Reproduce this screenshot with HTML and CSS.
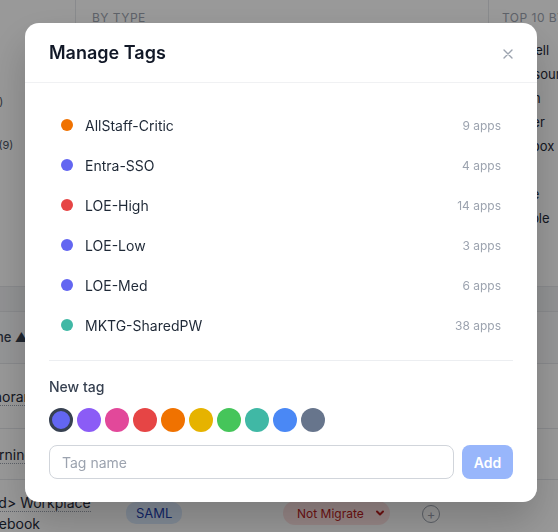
FILE: index.html
```html
<!DOCTYPE html>
<html lang="en">
<head>
  <meta charset="UTF-8" />
  <meta name="viewport" content="width=device-width, initial-scale=1.0"/>
  <title>Manage Tags</title>
  <link rel="stylesheet" href="styles.css">
</head>
<body>
  <div class="page">
    <section class="stats">
      <div class="stat-col">
        <ul class="legend">
          <li>Other (21)</li>
          <li class="shifted">Service (9)</li>
        </ul>
      </div>
      <div class="stat-col">
        <div class="stat-label">By Type</div>
      </div>
      <div class="stat-col">
        <div class="stat-label">Top 10 by apps</div>
        <ul class="top-list">
          <li>Gabriell</li>
          <li>IT Resource</li>
          <li>Bloom</li>
          <li>Leader</li>
          <li>Dropbox</li>
          <li>Shop</li>
          <li>Office</li>
          <li>Airtable</li>
          <li class="more">·</li>
        </ul>
      </div>
    </section>

    <section class="table-card">
      <div class="row head">
        <div class="cell">Name ▲</div>
        <div class="cell">Type</div>
        <div class="cell">Status</div>
        <div class="cell"></div>
      </div>
      <div class="row tall">
        <div class="cell"><span class="app-name">Honorarium</span></div>
        <div class="cell"></div>
        <div class="cell"></div>
        <div class="cell"></div>
      </div>
      <div class="row">
        <div class="cell"><span class="app-name">Learning</span></div>
        <div class="cell"></div>
        <div class="cell"></div>
        <div class="cell"></div>
      </div>
      <div class="row">
        <div class="cell"><span class="app-name">&lt;Old&gt; Workplace Facebook</span></div>
        <div class="cell"><span class="badge">SAML</span></div>
        <div class="cell">
          <span class="status">Not Migrate
            <svg width="10" height="10" viewBox="0 0 10 10"><path d="M2 3.5 L5 6.5 L8 3.5" fill="none" stroke="#b91c1c" stroke-width="2" stroke-linecap="round" stroke-linejoin="round"/></svg>
          </span>
        </div>
        <div class="cell"><span class="add-tag">+</span></div>
      </div>
    </section>
  </div>

  <div class="overlay">
    <div class="modal">
      <div class="modal-header">
        <h2>Manage Tags</h2>
        <button class="close-btn" aria-label="Close">
          <svg width="10" height="10" viewBox="0 0 10 10"><path d="M1 1 L9 9 M9 1 L1 9" stroke="#9ca3af" stroke-width="1.4" stroke-linecap="round"/></svg>
        </button>
      </div>

      <div class="modal-body">
        <ul class="tag-list">
          <li class="tag-row"><span class="dot orange"></span><span class="tag-name">AllStaff-Critic</span><span class="tag-count">9 apps</span></li>
          <li class="tag-row"><span class="dot indigo"></span><span class="tag-name">Entra-SSO</span><span class="tag-count">4 apps</span></li>
          <li class="tag-row"><span class="dot red"></span><span class="tag-name">LOE-High</span><span class="tag-count">14 apps</span></li>
          <li class="tag-row"><span class="dot indigo"></span><span class="tag-name">LOE-Low</span><span class="tag-count">3 apps</span></li>
          <li class="tag-row"><span class="dot indigo"></span><span class="tag-name">LOE-Med</span><span class="tag-count">6 apps</span></li>
          <li class="tag-row"><span class="dot teal"></span><span class="tag-name">MKTG-SharedPW</span><span class="tag-count">38 apps</span></li>
        </ul>

        <div class="new-tag">
          <div class="new-tag-label">New tag</div>
          <div class="swatches">
            <span class="swatch indigo selected"></span>
            <span class="swatch violet"></span>
            <span class="swatch pink"></span>
            <span class="swatch red"></span>
            <span class="swatch orange"></span>
            <span class="swatch yellow"></span>
            <span class="swatch green"></span>
            <span class="swatch teal"></span>
            <span class="swatch blue"></span>
            <span class="swatch slate"></span>
          </div>
          <div class="new-tag-row">
            <input type="text" placeholder="Tag name" />
            <button class="add-btn" disabled>Add</button>
          </div>
        </div>
      </div>
    </div>
  </div>
</body>
</html>
```

FILE: styles.css
```css
* {
  box-sizing: border-box;
}

body {
  margin: 0;
  background: #f3f4f6;
  font-family: Inter, 'Noto Sans', sans-serif;
  color: #1f2937;
  overflow: hidden;
}

ul {
  list-style: none;
  margin: 0;
  padding: 0;
}

/* dashboard behind the dialog */

.page {
  width: 698px;
  margin-left: -140px;
}

.stats {
  display: grid;
  grid-template-columns: 215px 413px 1fr;
  height: 287px;
  background: #fff;
  border-bottom: 1px solid #e5e7eb;
}

.stat-col {
  overflow: hidden;
}

.stat-col + .stat-col {
  border-left: 1px solid #e5e7eb;
}

.stat-col:nth-child(2) {
  padding-left: 16px;
}

.stat-col:nth-child(3) {
  padding-left: 13px;
}

.stat-label {
  margin-top: 11px;
  font-size: 12px;
  line-height: 14px;
  text-transform: uppercase;
  letter-spacing: 0.04em;
  color: #9ca3af;
  white-space: nowrap;
}

.legend {
  padding: 94px 0 0 92px;
  font-size: 11px;
  color: #4b5563;
}

.legend li {
  line-height: 16px;
  margin-bottom: 27px;
  white-space: nowrap;
}

.legend .shifted {
  padding-left: 4px;
}

.top-list {
  margin-top: 13px;
  font-size: 13px;
  color: #1f2937;
}

.top-list li {
  line-height: 24px;
  white-space: nowrap;
}

.top-list .more {
  color: #9ca3af;
}

.table-card {
  margin: 24px 0 0 99px;
  background: #fff;
  border-top: 1px solid #e5e7eb;
}

.row {
  display: grid;
  grid-template-columns: 151px 157px 139px 1fr;
  align-items: center;
  min-height: 51px;
  border-bottom: 1px solid #e5e7eb;
  font-size: 14px;
}

.row.head {
  min-height: 52px;
  background: #f9fafb;
  font-size: 13px;
  font-weight: 500;
  color: #374151;
}

.row.tall {
  min-height: 65px;
}

.cell {
  padding: 12px 16px;
  line-height: 21px;
}

.app-name {
  border-bottom: 1px dotted #9ca3af;
}

.badge {
  display: inline-block;
  padding: 1px 10px;
  border-radius: 10px;
  background: #dbeafe;
  color: #1e40af;
  font-size: 13px;
  line-height: 20px;
}

.status {
  display: inline-flex;
  align-items: center;
  justify-content: space-between;
  width: 107px;
  height: 24px;
  padding: 0 5px 0 14px;
  border-radius: 12px;
  background: #fee2e2;
  color: #b91c1c;
  font-size: 12px;
  white-space: nowrap;
}

.add-tag {
  display: inline-flex;
  align-items: center;
  justify-content: center;
  width: 18px;
  height: 18px;
  border: 1px solid #9ca3af;
  border-radius: 50%;
  color: #9ca3af;
  font-size: 13px;
  line-height: 1;
}

/* dialog */

.overlay {
  position: fixed;
  inset: 0;
  background: rgba(0, 0, 0, 0.4);
  display: flex;
  align-items: flex-start;
  padding: 23px 0 0 25px;
}

.modal {
  width: 512px;
  background: #fff;
  border-radius: 14px;
  box-shadow: 0 20px 40px rgba(0, 0, 0, 0.2);
}

.modal-header {
  display: flex;
  align-items: center;
  justify-content: space-between;
  height: 60px;
  padding: 0 24px;
  border-bottom: 1px solid #f0f1f3;
}

.modal-header h2 {
  margin: 0;
  font-size: 18px;
  font-weight: 600;
  color: #111827;
}

.close-btn {
  display: flex;
  align-items: center;
  justify-content: center;
  width: 16px;
  height: 16px;
  margin-right: -3px;
  margin-top: 2px;
  padding: 0;
  border: none;
  background: none;
  cursor: pointer;
}

.modal-body {
  padding: 22px 24px 23px;
}

.tag-list {
  margin-bottom: 15px;
}

.tag-row {
  display: flex;
  align-items: center;
  height: 40px;
  padding: 0 12px;
}

.dot {
  width: 12px;
  height: 12px;
  border-radius: 50%;
  margin-right: 12px;
  flex-shrink: 0;
}

.tag-name {
  flex: 1;
  font-size: 14px;
  color: #1f2937;
}

.tag-count {
  font-size: 12px;
  color: #9ca3af;
}

.new-tag {
  border-top: 1px solid #eceef1;
  padding-top: 16px;
}

.new-tag-label {
  font-size: 14px;
  font-weight: 500;
  line-height: 20px;
  color: #374151;
  margin-bottom: 11px;
}

.swatches {
  display: flex;
  gap: 4px;
  margin-bottom: 13px;
}

.swatch {
  width: 24px;
  height: 24px;
  border-radius: 50%;
  cursor: pointer;
}

.swatch.selected {
  border: 3px solid #374151;
}

.new-tag-row {
  display: flex;
  gap: 8px;
}

.new-tag-row input {
  flex: 1;
  height: 34px;
  padding: 0 12px;
  border: 1px solid #d1d5db;
  border-radius: 8px;
  font-family: inherit;
  font-size: 14px;
  color: #1f2937;
}

.new-tag-row input::placeholder {
  color: #9ca3af;
}

.add-btn {
  width: 51px;
  height: 34px;
  border: none;
  border-radius: 8px;
  background: #98b6fb;
  color: #fff;
  font-family: inherit;
  font-size: 14px;
  font-weight: 600;
}

/* tag colours */

.indigo { background: #6366f1; }
.violet { background: #8b5cf6; }
.pink { background: #e2489a; }
.red { background: #e64545; }
.orange { background: #f07200; }
.yellow { background: #e6b300; }
.green { background: #45c55a; }
.teal { background: #40b8a5; }
.blue { background: #4a88f5; }
.slate { background: #67758c; }
```
